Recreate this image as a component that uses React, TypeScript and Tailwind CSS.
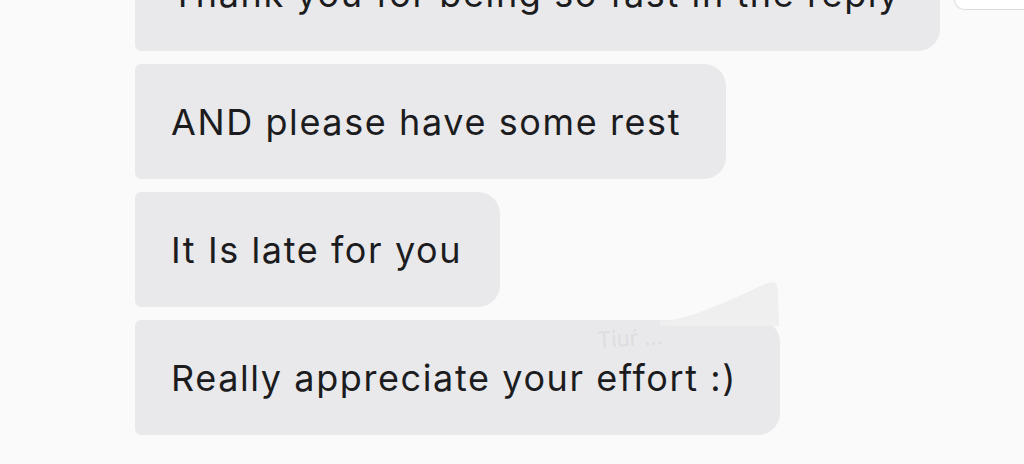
const MESSAGES = [
  { text: 'Thank you for being so fast in the reply', width: 'w-[805px]' },
  { text: 'AND please have some rest', width: 'w-[591px]' },
  { text: 'It Is late for you', width: 'w-[365px]' },
  { text: 'Really appreciate your effort :)', width: 'w-[645px]' },
];

function Bubble({ text, width, children }: { text: string; width: string; children?: React.ReactNode }) {
  return (
    <div className={`relative h-[115px] ${width} flex-none flex items-center pl-[36px] rounded-l-[6px] rounded-r-[22px] bg-[#e9e9eb]`}>
      <span className="text-[36px] leading-none text-[#1c1c1f] whitespace-nowrap tracking-[1.6px]">{text}</span>
      {children}
    </div>
  );
}

export default function App() {
  return (
    <div
      className="w-[1024px] h-[464px] overflow-hidden bg-[#fafafa]"
      style={{ fontFamily: 'Inter, "Noto Sans", sans-serif' }}
    >
      <div className="flex flex-col gap-[13px] pl-[135px] -mt-[64px]">
        <div className="flex items-start gap-[14px]">
          <Bubble {...MESSAGES[0]} />
          {/* edge of the neighbouring panel */}
          <div className="flex-1 h-[74px] bg-white border border-[#dcdcdc] border-r-0 rounded-bl-[10px]" />
        </div>
        <Bubble {...MESSAGES[1]} />
        <Bubble {...MESSAGES[2]} />
        <Bubble {...MESSAGES[3]}>
          {/* redacted smudge over the corner */}
          <svg className="absolute left-[525px] -top-[40px]" width="120" height="46" viewBox="0 0 120 46">
            <path
              d="M0 41 C25 40 45 30 70 20 C90 12 102 4 112 2 C117 2 118 6 118 14 L119 46 L0 46 Z"
              fill="#efeff0"
            />
          </svg>
          <span className="absolute left-[462px] top-[7px] text-[22px] leading-none text-[#dddddf] -rotate-3">
            Tiuŕ ...
          </span>
        </Bubble>
      </div>
    </div>
  );
}
